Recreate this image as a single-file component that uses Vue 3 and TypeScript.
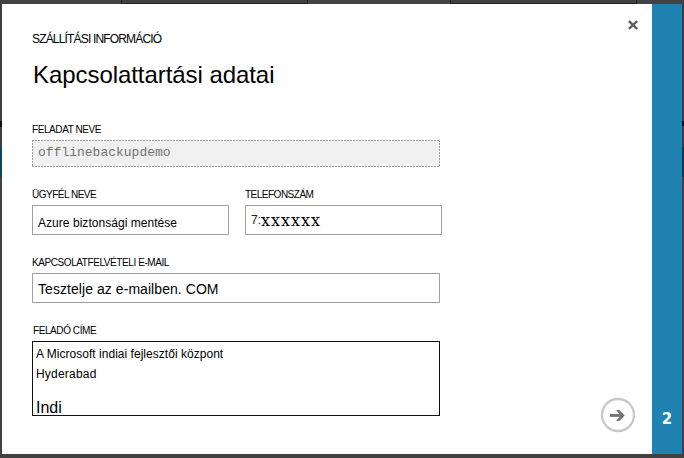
<script setup lang="ts">
import { ref } from 'vue'

const jobName = ref('offlinebackupdemo')
const customer = ref('Azure biztonsági mentése')
const email = ref('Tesztelje az e-mailben. COM')
</script>

<template>
  <div class="backdrop">
    <div class="top-strip"><i class="seg first"></i><i class="seg second"></i><i class="seg third"></i><i class="seg fourth"></i></div>
    <div class="middle">
      <div class="edge left"></div>
      <main class="dialog">
        <button class="close" aria-label="Bezárás">
          <svg width="10" height="10" viewBox="0 0 10 10"><path d="M1.7 1.9 8.3 8.1M8.3 1.9 1.7 8.1" stroke="#606060" stroke-width="2.5" stroke-linecap="square" /></svg>
        </button>
        <p class="eyebrow"><span>SZÁLLÍTÁSI INFORMÁCIÓ</span></p>
        <h1>Kapcsolattartási adatai</h1>
        <label class="job-label">FELADAT NEVE</label>
        <div class="field job">{{ jobName }}</div>
        <div class="pair">
          <div><label class="customer-label">ÜGYFÉL NEVE</label><div class="field customer">{{ customer }}</div></div>
          <div><label class="phone-label">TELEFONSZÁM</label><div class="field phone"><span class="digits">7:</span><span class="masked">xxxxxx</span></div></div>
        </div>
        <label class="email-label">KAPCSOLATFELVÉTELI E-MAIL</label>
        <div class="field email">{{ email }}</div>
        <label class="address-label">FELADÓ CÍME</label>
        <div class="field address">
          <div class="line one">A Microsoft indiai fejlesztői központ</div>
          <div class="line two">Hyderabad</div>
          <div class="line three">Indi</div>
        </div>
        <button class="next" aria-label="Tovább">
          <svg width="36" height="36" viewBox="0 0 36 36">
            <circle cx="18" cy="18" r="16" fill="none" stroke="#c8c8c8" stroke-width="2.3" />
            <path d="M10 18.4H22.5" fill="none" stroke="#757575" stroke-width="3" />
            <path d="M16 12.9H19.4L24.8 18.4 19.4 23.9H16L20.8 18.4Z" fill="#757575" />
          </svg>
        </button>
      </main>
      <aside class="step">2</aside>
      <div class="edge right"></div>
    </div>
  </div>
</template>

<style>
body { margin: 0; overflow: hidden; }
</style>
<style scoped>
* { box-sizing: border-box; }
.backdrop { width: 684px; height: 458px; background: #414042; font-family: "Liberation Sans", Arial, sans-serif; color: #000; }
.top-strip { display: flex; height: 4px; background: #424242; }
.seg { height: 4px; }
.first { width: 121px; }
.second { width: 187px; background: #404040; border: solid #242424; border-width: 0 1px 1px; }
.third { width: 142px; }
.fourth { width: 187px; background: #404040; border: solid #242424; border-width: 0 1px 1px; }
.middle { display: flex; height: 450px; }
.edge { width: 2px; }
.left { background: linear-gradient(#3d3d3e 0 117px, #101010 117px 123px, #3d3d3e 123px 143px, #0e4660 143px 173px, #414042 173px); }
.right { background: linear-gradient(#3d3d3e 0 117px, #101010 117px 122px, #3d3d3e 122px 143px, #1b343f 143px 173px, #414042 173px); }
.dialog { position: relative; width: 650px; height: 450px; padding: 27px 0 0 30px; background: #fff; }
.step { width: 30px; padding-top: 404px; background: #1f82b0; color: #fff; text-align: center; font: bold 15px/23px "DejaVu Sans", sans-serif; }
button { position: absolute; padding: 0; border: 0; background: none; line-height: 0; }
.close { right: 14px; top: 16px; }
.next { right: 16px; top: 393px; }
p, h1 { margin: 0; font-weight: normal; white-space: nowrap; }
.eyebrow { height: 16px; font-size: 12px; line-height: 16px; letter-spacing: -0.83px; }
h1 { height: 32px; margin: 12px 0 0 1px; font-size: 24px; line-height: 32px; letter-spacing: -0.06px; }
label { display: block; height: 14px; font-size: 10px; line-height: 14px; letter-spacing: -0.42px; white-space: nowrap; }
.job-label { margin-top: 32px; }
.field { border: 1px solid #a0a0a0; white-space: nowrap; }
.job {
  width: 408px; height: 27px; margin-top: 3px; padding: 1px 0 0 6px; border: 0; color: #707070; font: 13px/23px "Liberation Mono", monospace;
  background:
    repeating-linear-gradient(90deg, #a0a0a0 0 2px, #f0f0f0 2px 3px) top / 100% 1px no-repeat,
    repeating-linear-gradient(90deg, #a0a0a0 0 2px, #f0f0f0 2px 3px) bottom / 100% 1px no-repeat,
    repeating-linear-gradient(#a0a0a0 0 2px, #f0f0f0 2px 3px) left / 1px 100% no-repeat,
    repeating-linear-gradient(#a0a0a0 0 2px, #f0f0f0 2px 3px) right / 1px 100% no-repeat,
    #f0f0f0;
}
.pair { display: flex; gap: 16px; margin-top: 21px; }
.customer, .phone { width: 197px; height: 30px; margin-top: 3px; padding-left: 5px; }
.customer { font-size: 12px; line-height: 34px; letter-spacing: 0.04px; }
.phone { display: flex; line-height: 29px; }
.customer-label, .phone-label { letter-spacing: -0.5px; }
.digits { width: 10px; font-size: 12px; color: #222; }
.masked { font: 16px/29px "DejaVu Serif", serif; letter-spacing: 0.97px; }
.email-label { margin-top: 21px; }
.email { width: 408px; height: 30px; margin-top: 3px; padding-left: 5px; font-size: 14px; line-height: 30px; letter-spacing: 0.06px; }
.address-label { margin: 21px 0 0 1px; }
.address { width: 408px; height: 75px; margin-top: 3px; padding: 2px 0 0 3px; border-color: #111; }
.line { height: 20px; font-size: 12px; line-height: 20px; }
.one { letter-spacing: 0.03px; }
.two { letter-spacing: 0.2px; }
.three { margin-top: 14px; font-size: 16px; }
</style>
